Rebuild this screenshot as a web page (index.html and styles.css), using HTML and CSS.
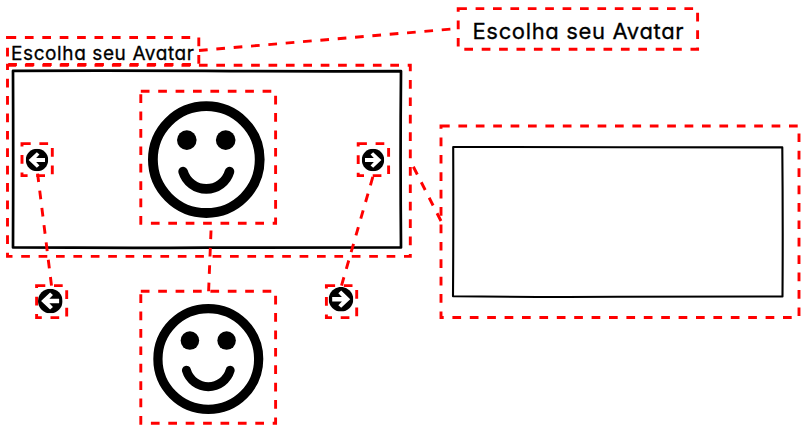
FILE: index.html
```html
<!DOCTYPE html>
<html lang="pt-BR">
<head>
<meta charset="utf-8">
<title>Escolha seu Avatar</title>
<link rel="stylesheet" href="styles.css">
</head>
<body>
<main class="canvas">
  <svg class="drawing" viewBox="0 0 807 433" aria-hidden="true">
    <defs>
      <symbol id="smiley" viewBox="-60 -60 120 120">
        <circle r="53.4" fill="none" stroke="#000" stroke-width="9.8"/>
        <circle cx="-19.5" cy="-19.5" r="9.8"/>
        <circle cx="19.4" cy="-19.5" r="9.8"/>
        <path d="M-23.2 12A24.2 24.2 0 0 0 23.2 12" fill="none" stroke="#000" stroke-width="9.6" stroke-linecap="round"/>
      </symbol>
      <symbol id="arrow" viewBox="-12 -12 24 24">
        <circle r="12"/>
        <path d="M-9 0L-.2 -8.4L2.6 -5.8L-.9 -2.2H8.6V2.2H-.9L2.6 5.8L-.2 8.4Z" fill="#fff"/>
      </symbol>
    </defs>
    <g class="panel">
      <path d="M13 70.8Q110 70.3 205 70.9T401 71.2Q400.2 160 401 247.5Q300 247.2 206 247.7T13 247.4Q13.4 160 13 70.8Z"/>
      <path class="thin" d="M453.2 147Q540 146.8 620 147.2T782.3 147.4Q783 220 782.5 296.5Q700 296.3 618 296.8T453 296.2Q453.5 220 453.2 147Z"/>
    </g>
    <use href="#smiley" x="146.3" y="99.6" width="120" height="120"/>
    <use href="#smiley" x="151.7" y="302.4" width="113.2" height="113.2"/>
    <use href="#arrow" x="25.8" y="148.8" width="22.4" height="22.4"/>
    <use href="#arrow" x="-384.2" y="148.8" width="22.4" height="22.4" transform="scale(-1 1)"/>
    <use href="#arrow" x="38" y="288.7" width="24.6" height="24.6"/>
    <use href="#arrow" x="-353.3" y="286.9" width="24.6" height="24.6" transform="scale(-1 1)"/>
    <g class="guides">
      <rect x="7.5" y="37.5" width="191.3" height="27"/>
      <rect x="7.5" y="65.2" width="402.8" height="191.2"/>
      <rect x="140.8" y="91.3" width="134.8" height="132"/>
      <rect x="22" y="143.6" width="30.3" height="32"/>
      <rect x="358.2" y="143.6" width="30.4" height="32"/>
      <rect x="36.6" y="285.6" width="30.1" height="32"/>
      <rect x="326.4" y="285.6" width="30.3" height="32"/>
      <rect x="140.8" y="291.3" width="134.8" height="132"/>
      <rect x="458.2" y="8.6" width="239.4" height="40.6"/>
      <rect x="441" y="126" width="358" height="191.5"/>
      <path d="M199 50.5L458 28.5M51.5 285.6L37.6 173.6M341.5 285.6L373.2 175.6M208.6 291.3L211.3 223.5M441 221L413 166"/>
    </g>
  </svg>
  <h1 class="label label-screen">Escolha seu Avatar</h1>
  <p class="label label-detail">Escolha seu Avatar</p>
</main>
</body>
</html>
```
FILE: styles.css
```css
body {
  margin: 0;
  background: #fff;
}
.canvas {
  position: relative;
  width: 807px;
  height: 433px;
  overflow: hidden;
}
.drawing {
  display: block;
  width: 100%;
  height: 100%;
}
.panel {
  fill: none;
  stroke: #000;
  stroke-width: 2.7;
  stroke-linejoin: round;
}
.panel .thin {
  stroke-width: 2.1;
}
.guides {
  fill: none;
  stroke: #f00;
  stroke-width: 2.9;
  stroke-dasharray: 8.7 8.7;
}
.label {
  position: absolute;
  margin: 0;
  color: #000;
  font-family: Inter, Lato, sans-serif;
  font-weight: 400;
  font-feature-settings: "cv11";
  line-height: 28px;
  white-space: nowrap;
  -webkit-text-stroke: 0.3px #000;
}
.label-screen {
  left: 11px;
  top: 40px;
  font-size: 19px;
  letter-spacing: 0.6px;
}
.label-detail {
  left: 472.5px;
  top: 17px;
  font-size: 22px;
  letter-spacing: 0.65px;
}
```
